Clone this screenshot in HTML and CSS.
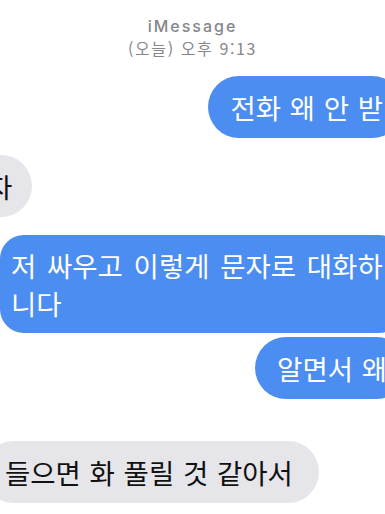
FILE: index.html
```html
<!DOCTYPE html>
<html lang="ko">
<head>
    <meta charset="UTF-8">
    <meta name="viewport" content="width=device-width, initial-scale=1.0">
    <title>iMessage</title>
    <link rel="stylesheet" href="styles.css">
</head>
<body>
    <!-- Conversation header -->
    <header class="chat-header">
        <div class="service">iMessage</div>
        <div class="timestamp">(오늘) 오후 9:13</div>
    </header>

    <!-- Messages -->
    <main class="thread">
        <div class="bubble sent first">전화 왜 안 받</div>
        <div class="bubble received short">자</div>
        <div class="bubble sent wide">저 싸우고 이렇게 문자로 대화하<br>니다</div>
        <div class="bubble sent follow">알면서 왜</div>
        <div class="bubble received last">들으면 화 풀릴 것 같아서</div>
    </main>
</body>
</html>
```

FILE: styles.css
```css
/* General Styles */
body {
    margin: 0;
    padding: 0;
    background-color: #fff;
    font-family: "Noto Sans CJK KR", "Noto Sans", sans-serif;
    overflow: hidden;
}

/* Header */
.chat-header {
    padding-top: 15px;
    text-align: center;
    color: #86868b;
}

.service {
    font-family: Inter, "Noto Sans CJK KR", sans-serif;
    font-size: 16px;
    font-weight: 500;
    letter-spacing: 2px;
    line-height: 22px;
}

.timestamp {
    font-size: 16px;
    letter-spacing: 1.6px;
    line-height: 22px;
}

/* Thread */
.thread {
    display: flex;
    flex-direction: column;
    padding-top: 17px;
}

.bubble {
    font-size: 27.5px;
    line-height: 38px;
    padding: 12px 20px 12px 22px;
    border-radius: 31px;
    white-space: nowrap;
    word-spacing: 1px;
}

.sent {
    align-self: flex-end;
    background-color: #4b8df0;
    color: #fff;
}

.received {
    align-self: flex-start;
    background-color: #e5e5ea;
    color: #111;
}

/* Individual messages */
.first {
    margin-right: -18px;
}

.short {
    margin-top: 17px;
    margin-left: -35px;
}

.wide {
    align-self: flex-start;
    margin-top: 18px;
    padding: 11px 20px 11px 11px;
    border-radius: 24px;
    word-spacing: 3px;
}

.follow {
    margin-top: 4px;
    margin-right: -22px;
}

.last {
    margin-top: 42px;
    margin-left: -17px;
    padding-right: 26px;
}
```
